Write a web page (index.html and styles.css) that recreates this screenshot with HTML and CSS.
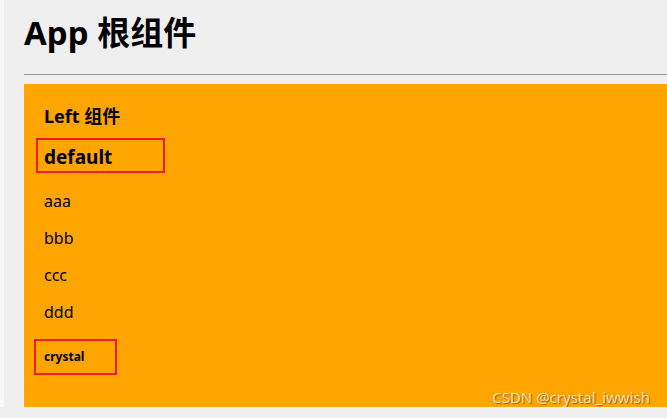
FILE: index.html
```html
<!DOCTYPE html>
<html lang="zh-CN">
<head>
    <meta charset="UTF-8">
    <meta name="viewport" content="width=device-width, initial-scale=1.0">
    <title>App 根组件</title>
    <link rel="stylesheet" href="styles.css">
</head>
<body>
    <div class="app">
        <h1>App 根组件</h1>
        <hr>
        <div class="left">
            <h3>Left 组件</h3>
            <h3 class="mark slot-default">default</h3>
            <p>aaa</p>
            <p>bbb</p>
            <p>ccc</p>
            <p>ddd</p>
            <h6 class="mark slot-named">crystal</h6>
            <span class="watermark">CSDN @crystal_iwwish</span>
        </div>
    </div>
</body>
</html>
```

FILE: styles.css
```css
body, html {
    font-family: 'Noto Sans', 'Noto Sans CJK SC', sans-serif;
    margin: 0;
    padding: 0;
    background-color: #efefef;
    color: #000;
    overflow: hidden;
}
.app {
    border-left: 4px solid #f9f9f9;
    padding: 0 0 0 20px;
}
h1 {
    font-size: 33px;
    line-height: 40px;
    margin: 0;
    padding: 13px 0 21px;
}
hr {
    border: none;
    border-top: 1px solid #999;
    margin: 0 0 9px;
}
.left {
    background: orange;
    padding: 20px 20px 32px;
    position: relative;
}
h3 {
    font-size: 18px;
    line-height: 24px;
    margin: 0;
}
p {
    font-size: 16px;
    line-height: 21px;
    margin: 16px 0;
}
.mark {
    border: 2px solid #ee1c25;
    box-sizing: border-box;
}
.slot-default {
    width: 129px;
    height: 35px;
    line-height: 27px;
    font-size: 19px;
    margin: 10px 0 18px -8px;
    padding: 4px 0 0 6px;
}
.slot-named {
    width: 83px;
    height: 36px;
    line-height: 31px;
    font-size: 12px;
    margin: 16px 0 0 -10px;
    padding-left: 8px;
}
.watermark {
    position: absolute;
    right: 17px;
    bottom: 0;
    font-size: 15px;
    line-height: 20px;
    color: rgba(255, 255, 255, 0.7);
    text-shadow: 1px 1px 1px rgba(90, 60, 0, 0.6);
}
```
